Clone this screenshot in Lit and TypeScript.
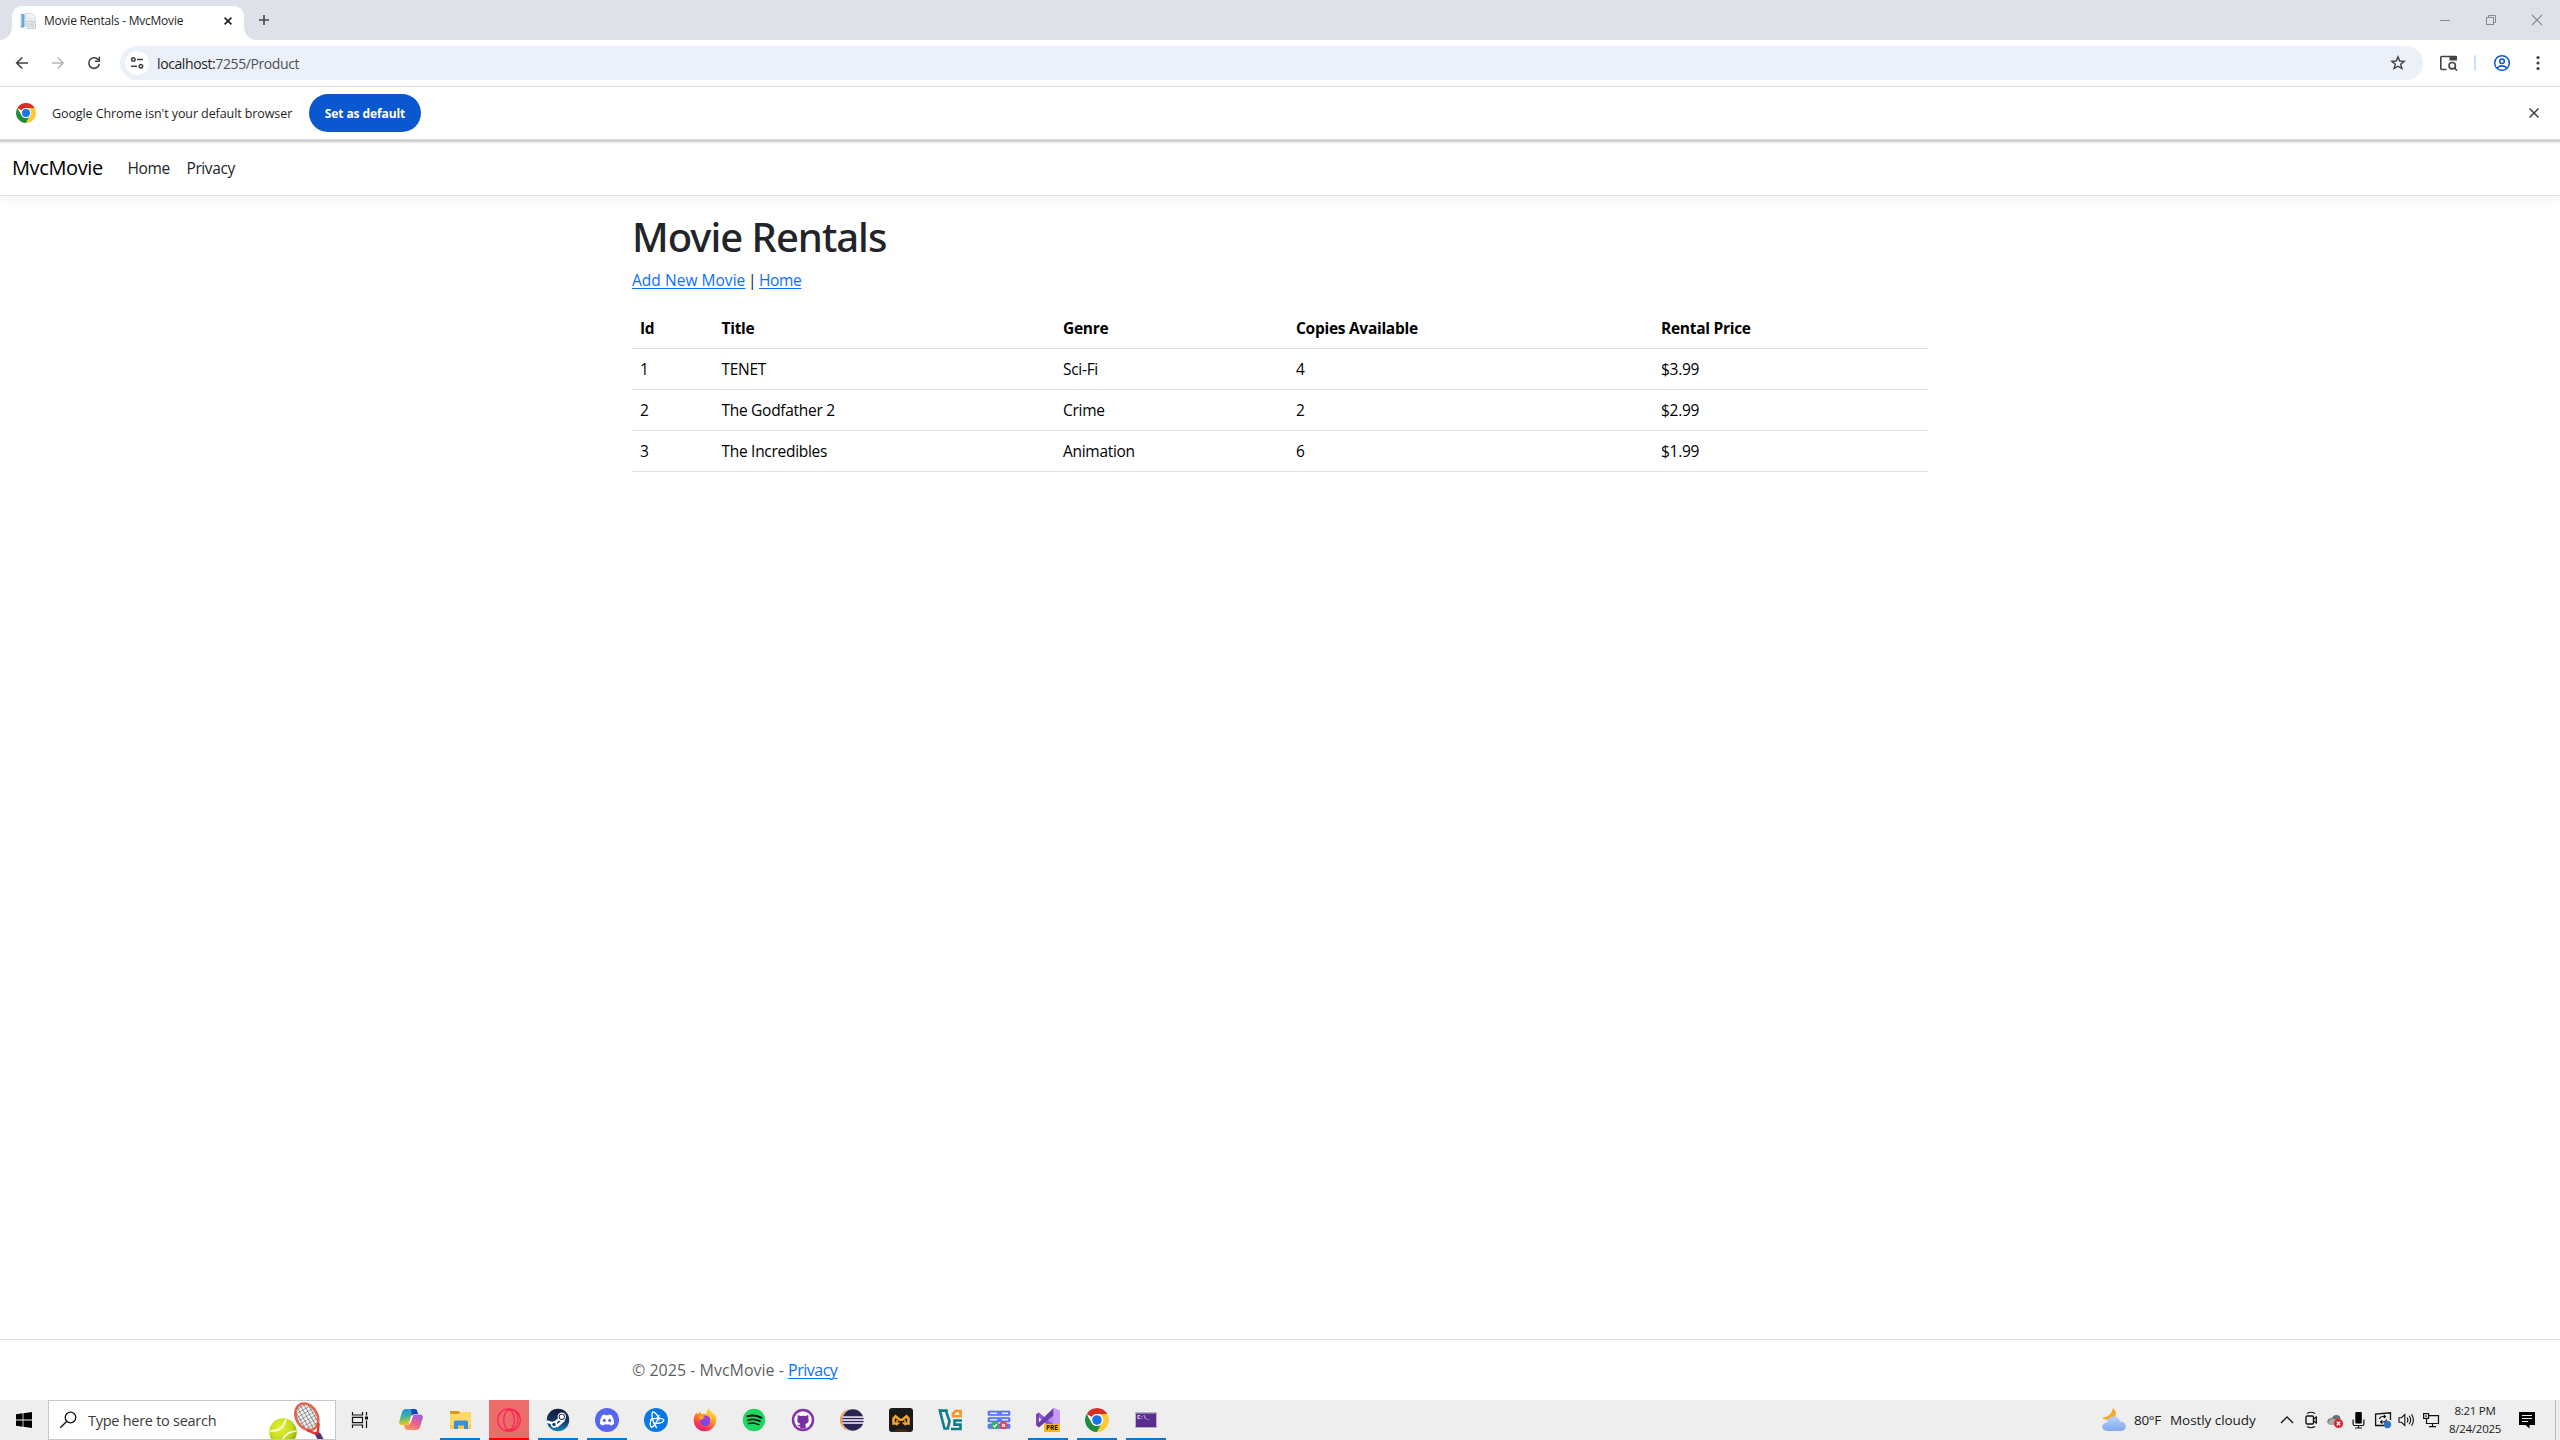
import { LitElement, html, css, svg, TemplateResult } from "lit";
import { customElement } from "lit/decorators.js";
import { classMap } from "lit/directives/class-map.js";

const icon = (size: number, body: unknown, box = size) =>
  html`<svg width=${size} height=${size} viewBox="0 0 ${box} ${box}" fill="none">${body}</svg>`;

const chromeLogo = svg`
  <circle cx="12" cy="12" r="12" fill="#fff"/>
  <path d="M1.610 6A12 12 0 0 1 22.390 6H12A6 6 0 0 0 6.800 9Z" fill="#d93025"/>
  <path d="M1.610 6A12 12 0 0 0 12 24L17.200 15A6 6 0 0 1 6.800 15Z" fill="#1e8e3e"/>
  <path d="M22.390 6A12 12 0 0 1 12 24L17.200 15A6 6 0 0 0 12 6Z" fill="#fcc934"/>
  <circle cx="12" cy="12" r="6" fill="#fff"/>
  <circle cx="12" cy="12" r="4.800" fill="#1a73e8"/>`;

interface App { art: TemplateResult | unknown; open?: boolean; alert?: boolean; }

const apps: App[] = [
  { art: svg`
    <defs>
      <linearGradient id="cp1" x1="0" y1="0" x2="0.2" y2="1"><stop offset="0" stop-color="#1a8ff0"/><stop offset=".5" stop-color="#3cb49a"/><stop offset="1" stop-color="#f2c811"/></linearGradient>
      <linearGradient id="cp2" x1="0.8" y1="0" x2="0.2" y2="1"><stop offset="0" stop-color="#a05be8"/><stop offset=".5" stop-color="#ec5f8c"/><stop offset="1" stop-color="#fb9a5a"/></linearGradient>
    </defs>
    <path d="M7 1H15.500Q17.500 1 18.200 3L19 6H15.500Q13.500 6 12.800 8L10.500 15Q9.800 17 7.800 17H3Q-.4 17 .4 13L3 4Q4 1 7 1Z" fill="url(#cp1)"/>
    <path d="M12 1H15.500Q17.500 1 18.200 3L19 6H15.500Q13.500 6 12.800 8Z" fill="#1547b8"/>
    <path d="M17 22H8.500Q6.500 22 5.800 20L5 17H8.500Q10.500 17 11.200 15L13.500 8.500Q14.200 6.500 16.200 6.500H21Q24.400 6.500 23.600 10.500L21 19Q20 22 17 22Z" fill="url(#cp2)"/>
    <path d="M14.200 7.200L12.200 7.800L9.800 15.800L11.600 14.800Z" fill="#fff"/>` },
  { open: true, art: svg`
    <path d="M2 3H11L12.500 5H21V8H2Z" fill="#d69a1e"/>
    <path d="M2 6H11L12.500 4H23V21H2Z" fill="#ffd867"/>
    <path d="M2 17H23V20.500H2Z" fill="#fcc84b"/>
    <path d="M6 21V14Q6 12.500 7.500 12.500H18.500Q20 12.500 20 14V21H16V17.500H10V21Z" fill="#3a8fd8"/>` },
  { open: true, alert: true, art: svg`
    <g stroke="#fa1e4e" stroke-width="1.100"><circle cx="12" cy="12" r="11.300"/><ellipse cx="12" cy="12" rx="5.300" ry="10"/><path d="M9.500 2.500C19.500-1 21.500 8 21 12S18.500 24 9.500 21.500"/></g>` },
  { open: true, art: svg`
    <defs><linearGradient id="st" x1="0" y1="0" x2="0" y2="1"><stop offset="0" stop-color="#14193a"/><stop offset=".55" stop-color="#123764"/><stop offset="1" stop-color="#1287b8"/></linearGradient></defs>
    <circle cx="12" cy="12" r="11.200" fill="url(#st)"/>
    <path d="M1 13.500L7.500 15.800L13 11L17 13L10.500 18.500" stroke="#fff" stroke-width="2.600"/>
    <circle cx="8.200" cy="16.500" r="3.200" fill="#fff"/><circle cx="8" cy="16.500" r="1.700" fill="#17426d"/>
    <circle cx="15.800" cy="8.800" r="4.200" fill="#fff"/><circle cx="15.800" cy="8.800" r="3.100" fill="#16213f"/><circle cx="15.800" cy="8.800" r="2.200" fill="#fff"/>` },
  { open: true, art: svg`
    <circle cx="12" cy="12" r="12" fill="#5865f2"/>
    <path d="M7.300 7.200Q8.800 6.500 10 6.400L10.500 7.200H13.500L14 6.400Q15.300 6.500 16.700 7.200Q19.500 11.200 19.200 15.800Q17.500 17.200 15.400 17.600L14.500 16.200Q12 16.900 9.500 16.200L8.600 17.600Q6.500 17.200 4.800 15.800Q4.500 11.200 7.300 7.200Z" fill="#fff"/>
    <ellipse cx="9.300" cy="12.400" rx="1.500" ry="1.700" fill="#5865f2"/><ellipse cx="14.700" cy="12.400" rx="1.500" ry="1.700" fill="#5865f2"/>` },
  { art: svg`
    <circle cx="12" cy="12" r="12" fill="#0a78e3"/>
    <g stroke="#fff" stroke-width="1.300" stroke-linecap="round"><path d="M9 3.800C7 6 8 14 12.500 19.500M9 3.800C11.500 4 14.500 8.500 15 12"/><path d="M19.800 12.200C18.500 9.500 11 9.500 6.500 12M19.800 12.200C19.500 14.800 14 15.800 10.500 15.200"/><path d="M7.300 19.300C10 19 14 13 15 7.500M7.300 19.300C5.500 18 6 14 7.500 11"/></g>` },
  { art: svg`
    <defs>
      <linearGradient id="ff" x1="0.8" y1="0" x2="0.25" y2="1"><stop offset="0" stop-color="#fff04a"/><stop offset=".4" stop-color="#ff9a1f"/><stop offset=".75" stop-color="#ff3b4f"/><stop offset="1" stop-color="#e31587"/></linearGradient>
      <linearGradient id="fi" x1="0.5" y1="0" x2="0.5" y2="1"><stop offset="0" stop-color="#b23ae0"/><stop offset="1" stop-color="#6250e0"/></linearGradient>
    </defs>
    <path d="M15.500.2C17.500 3 20 4.500 20.800 7C21.300 6.300 21.300 5.500 21.200 5C23.500 8.500 24 14 21.300 18A11.200 11.200 0 0 1 1.500 16.500C-.2 12 1 7.500 3.700 4.600L5 6.500L6.800 3.200L8.300 6C10 5.500 12 5.600 13.500 6.200C13.500 4 14 1.800 15.500.2Z" fill="url(#ff)"/>
    <circle cx="12.300" cy="12.800" r="5.300" fill="url(#fi)"/>
    <path d="M5.500 9C7 7 10 7.500 12 9.800C10.500 10 9.500 10.800 9 12C7.500 12 6 11 5.500 9Z" fill="#ffa51f"/>
    <path d="M14 6.300C18 8 18.500 12 17 15C19 13 19.500 9 17.500 6.500Z" fill="#ffd23a"/>` },
  { art: svg`
    <circle cx="12" cy="12" r="11.200" fill="#1ed760"/>
    <g stroke="#111" stroke-linecap="round"><path d="M5.500 8.300Q12.500 6.300 19.200 9.700" stroke-width="2.100"/><path d="M6 12Q12.300 10.300 18 13.200" stroke-width="1.800"/><path d="M6.500 15.500Q12 14 16.900 16.600" stroke-width="1.500"/></g>` },
  { art: svg`
    <circle cx="12" cy="12" r="11.200" fill="#8534a8"/>
    <circle cx="12" cy="12" r="8.700" fill="#fff"/>
    <path d="M6.800 7L9.600 8Q12 7.400 14.400 8L17.200 7Q17.800 8.500 17.300 10Q19 14.500 14.500 16L14.800 20.500H9.200V18.500Q7 18.800 6 16.500Q8 17.500 9.500 16Q5 14.500 6.700 10Q6.200 8.500 6.800 7Z" fill="#7a2f9f"/>` },
  { art: svg`
    <circle cx="11" cy="12" r="11" fill="#f79433"/>
    <circle cx="13" cy="12" r="11.200" fill="#eee"/>
    <circle cx="13" cy="12" r="10.700" fill="#2c2255"/>
    <g fill="#e8e4f2"><rect x="3" y="8.300" width="21" height="1.600"/><rect x="2.500" y="11.200" width="21.500" height="1.700"/><rect x="3" y="14.200" width="21" height="1.600"/></g>` },
  { art: svg`
    <rect width="24" height="24" rx="3" fill="#1b1a1a"/><path d="M3 24Q12 17 21 24Z" fill="#3a2d16"/>
    <path d="M8 15.500H4.500V10.500L6.500 8.300L10 11.200Q12 12.500 14 11.200L17.500 8.300L19.500 10.500V15.500H16" stroke="#f8a42c" stroke-width="2.500"/>
    <path d="M8 12V16.500L10.500 14.500M16 12V16.500L13.500 14.500" stroke="#f8a42c" stroke-width="1.500"/>` },
  { art: svg`
    <g stroke="#0d7d8c" stroke-width="2.600"><path d="M8.500 5V2.600H1.800L6.500 20.500H9.800L11.500 13L8.600 5"/><path d="M24 12.500H16.500V16.600H22.500V21H13"/></g>
    <path d="M15 8.300V5.500L17.500 3H22.500V8.300Z" stroke="#f7931e" stroke-width="2.600"/>` },
  { art: svg`
    <g fill="#5f7df5" stroke="#4a66e8" stroke-width=".6"><rect x="1" y="3" width="22" height="4.600" rx="1"/><rect x="1" y="9.500" width="22" height="4.600" rx="1"/><rect x="1" y="16" width="22" height="4.600" rx="1"/></g>
    <g stroke="#dfe6ff" stroke-width="1.400"><path d="M3 5.300H10M3 11.800H10M15 5.300H21M15 11.800H21"/></g>
    <circle cx="8" cy="17.300" r="3.800" fill="#2fb35a"/><path d="M6.200 17.300L7.600 18.800L10 16" stroke="#fff" stroke-width="1.200"/>
    <circle cx="16.500" cy="17.300" r="3.800" fill="#ee3b4b"/><path d="M15 15.800L18 18.800M18 15.800L15 18.800" stroke="#fff" stroke-width="1.200"/>` },
  { open: true, art: svg`
    <path d="M17.500 0L24 2.800V20.500L17.500 23.500L9 14Z" fill="#b98af0"/>
    <path d="M0 6.500L3 4.500L18 17V23.500Z" fill="#9157d8"/>
    <path d="M0 6.500L3 4.500V18.500L0 17Z" fill="#7a49b8"/>
    <path d="M17.500 0V7.500L3 19.500L0 17Z" fill="#6b3fa5"/>
    <path d="M17.500 0L24 2.800V20.500H17.500Z" fill="#c79af8"/>
    <rect x="8" y="16" width="16" height="8" rx=".8" fill="#fcb714"/>
    <text x="16" y="22.300" text-anchor="middle" class="pre">PRE</text>` },
  { open: true, art: chromeLogo },
  { open: true, art: svg`
    <rect x="1" y="4" width="22" height="16" fill="#b7b2bd"/>
    <rect x="2" y="5.500" width="20" height="13.500" fill="#5a2d91"/>
    <text x="3.200" y="11.300" class="prompt">C:\\_</text>` },
];

const tray = [
  svg`<path d="M6 15L12 9L18 15" stroke="#111" stroke-width="1.300"/>`,
  svg`<path d="M8 5.500Q12 3 16 5.500M8 18.500Q12 21 16 18.500" stroke="#111" stroke-width="1.200"/><rect x="7" y="8" width="7.500" height="8" rx="1.300" stroke="#111" stroke-width="1.400"/><path d="M14.500 11L17.300 9V15L14.500 13" stroke="#111" stroke-width="1.300"/>`,
  svg`<path d="M6.500 16.500Q3 15 5 11.500Q7 9.500 9 10Q10.500 6.500 14 7Q17.500 7.500 17.500 11L12.500 16.500Z" fill="#6e6e6e"/><path d="M5 15.500Q5.500 11 10 10.500L16 13L11 17H7Z" fill="#a9a9a9"/><circle cx="15.500" cy="15.500" r="4.600" fill="#dc2430"/><path d="M13.800 13.800L17.200 17.200M17.200 13.800L13.800 17.200" stroke="#fff" stroke-width="1.300"/>`,
  svg`<rect x="8.300" y="4" width="6.500" height="11.500" rx="1" fill="#000"/><path d="M6.100 11.500V16Q6.100 17.500 7.500 17.500H15.500Q16.900 17.500 16.900 16V11.500M11.500 17.500V20M8 20H15" stroke="#111" stroke-width="1.200"/>`,
  svg`<path d="M13 17.500H4.600V6.200L19.500 4.800V12" stroke="#111" stroke-width="1.300"/><path d="M8.500 11Q9 8.500 12 8.500H14M12.800 6.800L14.500 8.500L12.800 10.200M15.500 11.500Q15 14 12 14H10M11.300 12.300L9.600 14L11.300 15.700" stroke="#111" stroke-width="1.200"/><circle cx="16.500" cy="16.500" r="3.700" fill="#2f72bd"/>`,
  svg`<path d="M4 9.700H6.500L9.800 6.500V17.500L6.500 14.300H4Z" stroke="#111" stroke-width="1.100"/><path d="M12 9.500Q13.800 12 12 14.500M14.200 7.800Q17 12 14.200 16.200M16.500 6.200Q20.300 12 16.500 17.800" stroke="#111" stroke-width="1.100"/>`,
  svg`<path d="M9.500 7.600H19.500V15.500H7.500V12.500M13.500 15.500V18.500M10 18.600H17M7.500 10.500V13" stroke="#111" stroke-width="1.200"/><rect x="4.600" y="5.600" width="5" height="4.800" stroke="#111" stroke-width="1.200"/><rect x="6.300" y="7.300" width="1.500" height="1.500" fill="#111"/>`,
];

const movies = [
  { id: 1, title: "TENET", genre: "Sci-Fi", copies: 4, price: "$3.99" },
  { id: 2, title: "The Godfather 2", genre: "Crime", copies: 2, price: "$2.99" },
  { id: 3, title: "The Incredibles", genre: "Animation", copies: 6, price: "$1.99" },
];

@customElement("browser-chrome")
export class BrowserChrome extends LitElement {
  static styles = css`
    :host { display: block; font-family: "Open Sans", "Noto Sans", sans-serif; color: #1f1f1f; }
    svg { display: block; flex: none; }
    .strip { display: flex; align-items: center; height: 40px; background: #dee1e8; padding-left: 12px; box-sizing: border-box; }
    .tab { position: relative; display: flex; align-items: center; box-sizing: border-box; width: 232px; height: 34px; margin-top: 6px; padding: 0 12px 5px 8px; background: #fff; border-radius: 10px 10px 0 0; }
    .tab::before, .tab::after { content: ""; position: absolute; bottom: 0; width: 12px; height: 12px; }
    .tab::before { left: -12px; background: radial-gradient(circle at 0 0, transparent 11.5px, #fff 12px); }
    .tab::after { right: -12px; background: radial-gradient(circle at 100% 0, transparent 11.5px, #fff 12px); }
    .tab-title { flex: 1; margin-left: 8px; font-size: 12px; letter-spacing: -0.22px; white-space: nowrap; }
    .plus { margin-left: 12px; }
    .windows { display: flex; gap: 22px; margin-left: auto; margin-right: 11px; }
    .toolbar { display: flex; align-items: center; height: 46px; background: #fff; border-bottom: 1px solid #dcdddf; padding-left: 10px; }
    .nav { display: flex; gap: 12px; margin-right: 14px; }
    .omnibox { display: flex; align-items: center; flex: 1; height: 34px; border-radius: 17px; background: #ecf0f9; padding: 0 12px 0 5px; }
    .site { display: flex; align-items: center; justify-content: center; width: 24px; height: 24px; border-radius: 50%; background: #fff; }
    .url { flex: 1; margin-left: 8px; font-size: 14px; letter-spacing: -0.4px; color: #4d5156; }
    .host { color: #1f1f1f; }
    .tools { display: flex; align-items: center; }
    .side { margin: 0 13px 0 14px; }
    .bar { width: 2px; height: 16px; border-radius: 1px; background: #cfe0fc; }
    .profile { margin: 0 14px 0 16px; }
    .more { margin-right: 10px; }
    .infobar { position: relative; display: flex; align-items: center; height: 52px; background: #fff; padding: 0 14px 0 16px; }
    .infobar::after { content: ""; position: absolute; left: 0; right: 0; top: 52px; height: 5px; background: linear-gradient(#dadada 0 1px, #cbcbcb 1px 2px, #d6d6d6 2px 3px, #eeeeee 3px 4px, #f9f9f9 4px 5px); }
    .message { margin-left: 16px; width: 241px; font-size: 12.5px; letter-spacing: -0.09px; white-space: nowrap; }
    .default { display: flex; align-items: center; justify-content: center; width: 112px; height: 38px; margin-left: 16px; border: 0; border-radius: 19px; background: #0b57d0; color: #fff; font: 700 12px "Open Sans", sans-serif; letter-spacing: -0.1px; padding: 0; white-space: nowrap; }
    .dismiss { margin-left: auto; }
  `;

  render() {
    return html`
      <div class="strip">
        <div class="tab">
          ${icon(16, svg`<rect x=".8" y="1" width="3.700" height="13.500" fill="#63a6d8"/><rect x="1" y="2" width="1.200" height="11" fill="#9ccbea"/><path d="M5.500.5H12L15 3.500V13H5.500Z" fill="#f3f5f7" stroke="#c9ced3" stroke-width=".8"/><path d="M7 5H13M7 7H13" stroke="#d5dade" stroke-width=".8"/><rect x="7" y="8.500" width="8.500" height="7" fill="#e6eaed" stroke="#c3c8cd" stroke-width=".8"/><path d="M8.500 11H14M8.500 13H14" stroke="#b9bfc5" stroke-width=".8"/>`)}
          <span class="tab-title">Movie Rentals - MvcMovie</span>
          ${icon(8, svg`<path d="M.6.6L7.400 7.400M7.400.6L.6 7.400" stroke="#1f1f1f" stroke-width="1.600"/>`)}
        </div>
        <span class="plus">${icon(16, svg`<path d="M8 3V13M3 8H13" stroke="#45484d" stroke-width="1.600"/>`)}</span>
        <div class="windows">
          ${icon(24, svg`<path d="M7 12.500H17" stroke="#868a90"/>`)}
          ${icon(24, svg`<rect x="7.500" y="9.500" width="7" height="7" stroke="#868a90"/><path d="M9.500 9.500V7.500H16.500V14.500H14.500" stroke="#868a90"/>`)}
          ${icon(24, svg`<path d="M7 7L17 17M17 7L7 17" stroke="#868a90" stroke-width="1.100"/>`)}
        </div>
      </div>
      <div class="toolbar">
        <div class="nav">
          ${icon(24, svg`<path d="M18 12H7M12.200 6.500L6.700 12L12.200 17.500" stroke="#3f4246" stroke-width="1.600"/>`)}
          ${icon(24, svg`<path d="M6 12H17M11.800 6.500L17.300 12L11.800 17.500" stroke="#b3b5b8" stroke-width="1.600"/>`)}
          ${icon(24, svg`<path d="M16.600 9.200A5.300 5.300 0 1 0 17.300 13" stroke="#3f4246" stroke-width="1.600"/><path d="M17.300 5.800V10.200H12.900" stroke="#3f4246" stroke-width="1.600"/>`)}
        </div>
        <div class="omnibox">
          <span class="site">${icon(16, svg`<g stroke="#3f4246" stroke-width="1.600"><circle cx="4.300" cy="4.500" r="1.700"/><path d="M8 4.500H14M2 11.200H8"/><circle cx="11.900" cy="11.200" r="1.700"/></g>`)}</span>
          <span class="url"><span class="host">localhost:</span>7255/Product</span>
          ${icon(24, svg`<path d="M11 5.800L12.700 10L17.200 10.300L13.700 13.200L14.900 17.600L11 15.200L7.100 17.600L8.300 13.200L4.800 10.300L9.300 10Z" stroke="#3f4246" stroke-width="1.400"/>`)}
        </div>
        <div class="tools">
          <span class="side">${icon(24, svg`<path d="M9.500 18.500H4.800Q3.800 18.500 3.800 17.500V6.500Q3.800 5.500 4.800 5.500H18.500" stroke="#3f4246" stroke-width="1.600"/><rect x="12.500" y="5" width="7.500" height="4.500" fill="#3f4246"/><circle cx="15.200" cy="14.700" r="3.200" stroke="#3f4246" stroke-width="1.600"/><path d="M17.400 17L20 19.600" stroke="#3f4246" stroke-width="1.600"/>`)}</span>
          <span class="bar"></span>
          <span class="profile">${icon(20, svg`<circle cx="10" cy="10" r="7.300" stroke="#0b57d0" stroke-width="1.500"/><circle cx="10" cy="8.300" r="2.300" stroke="#0b57d0" stroke-width="1.500"/><path d="M4.900 15Q10 10.800 15.100 15" stroke="#0b57d0" stroke-width="1.500"/>`)}</span>
          <span class="more">${icon(24, svg`<g fill="#3f4246"><circle cx="12" cy="6.500" r="1.600"/><circle cx="12" cy="12" r="1.600"/><circle cx="12" cy="17.500" r="1.600"/></g>`)}</span>
        </div>
      </div>
      <div class="infobar">
        ${icon(20, chromeLogo, 24)}
        <span class="message">Google Chrome isn't your default browser</span>
        <button class="default">Set as default</button>
        <span class="dismiss">${icon(24, svg`<path d="M7.500 7.500L16.500 16.500M16.500 7.500L7.500 16.500" stroke="#3f4246" stroke-width="1.500"/>`)}</span>
      </div>`;
  }
}

@customElement("movie-page")
export class MoviePage extends LitElement {
  static styles = css`
    :host { display: flex; flex-direction: column; flex: 1; background: #fff; font: 15.5px/24px "Open Sans", "Noto Sans", sans-serif; color: #212529; }
    a { color: #0d6efd; text-decoration: underline; text-decoration-thickness: 1px; text-underline-offset: 2px; }
    .navbar { display: flex; align-items: center; box-sizing: border-box; height: 57px; padding: 1px 0 0 12px; border-bottom: 1px solid #dee2e6; box-shadow: 0 4px 12px rgba(0, 0, 0, .05); }
    .brand { width: 107.500px; font-size: 20px; letter-spacing: -0.38px; color: #000; }
    .nav-link { width: 51px; padding-left: 8px; letter-spacing: -0.4px; }
    .container { box-sizing: border-box; width: 1320px; margin: 0 auto; padding: 0 12px; }
    .content { flex: 1; padding-top: 17px; }
    h1 { margin: 0 0 7px; font: 500 40px/48px "Noto Sans", sans-serif; letter-spacing: -1px; }
    p { margin: 0 0 16px; letter-spacing: 0.04px; word-spacing: 0; }
    .sep { margin: 0 -1.5px; }
    .home { letter-spacing: -0.4px; }
    table { width: 100%; table-layout: fixed; border-collapse: separate; border-spacing: 0; color: #000; letter-spacing: -0.29px; }
    th, td { box-sizing: border-box; height: 41px; padding: 8px; border-bottom: 1px solid #dee2e6; text-align: left; }
    th { letter-spacing: -0.28px; }
    .c-id { width: 81.5px; } .c-title { width: 341.5px; } .c-genre { width: 233px; } .c-copies { width: 365px; }
    .footer { border-top: 1px solid #dee2e6; height: 60px; font-size: 16px; line-height: 61px; color: rgba(33, 37, 41, .75); }
    .footer-link { letter-spacing: -0.5px; }
  `;

  render() {
    return html`
      <nav class="navbar"><span class="brand">MvcMovie</span><span class="nav-link">Home</span><span class="nav-link">Privacy</span></nav>
      <main class="container content">
        <h1>Movie Rentals</h1>
        <p><a>Add New Movie</a> <span class="sep">|</span> <a class="home">Home</a></p>
        <table>
          <thead><tr><th class="c-id">Id</th><th class="c-title">Title</th><th class="c-genre">Genre</th><th class="c-copies">Copies Available</th><th>Rental Price</th></tr></thead>
          <tbody>${movies.map(m => html`<tr><td>${m.id}</td><td>${m.title}</td><td>${m.genre}</td><td>${m.copies}</td><td>${m.price}</td></tr>`)}</tbody>
        </table>
      </main>
      <footer class="footer"><div class="container">© 2025 - MvcMovie - <a class="footer-link">Privacy</a></div></footer>`;
  }
}

@customElement("task-bar")
export class TaskBar extends LitElement {
  static styles = css`
    :host { display: flex; height: 40px; background: #eee; font-family: "Open Sans", "Noto Sans", sans-serif; color: #1a1a1a; }
    svg { display: block; flex: none; }
    .start { display: flex; align-items: center; justify-content: center; width: 48px; }
    .search { display: flex; align-items: center; box-sizing: border-box; width: 288px; height: 40px; border: 1px solid #c8c8c8; background: #fff; padding-left: 7px; overflow: hidden; }
    .hint { flex: 1; margin-left: 8px; font-size: 14.5px; letter-spacing: -0.27px; color: #3a3a3a; white-space: nowrap; }
    .view { display: flex; align-items: center; justify-content: center; width: 48px; }
    .apps { display: flex; gap: 9px; margin-left: 7px; }
    .app { display: flex; align-items: center; justify-content: center; box-sizing: border-box; width: 40px; height: 40px; border-bottom: 2px solid transparent; padding-top: 2px; }
    .open { border-bottom-color: #0078d7; }
    .alert { background: #ec6b6b; border-bottom-color: #f00; }
    .pre { font: 700 6.5px "Open Sans", sans-serif; fill: #111; }
    .prompt { font: 700 5px "Liberation Mono", monospace; fill: #fff; }
    .right { display: flex; align-items: center; margin-left: auto; }
    .weather { display: flex; align-items: center; width: 173px; font-size: 13.5px; white-space: nowrap; }
    .temp { width: 36px; margin-left: 8px; letter-spacing: -0.3px; }
    .sky { letter-spacing: -0.06px; }
    .clock { display: flex; flex-direction: column; align-items: center; width: 64px; margin-right: 8px; font-size: 11.5px; line-height: 18px; letter-spacing: -0.25px; }
    .edge { width: 1px; height: 40px; margin: 0 4px 0 16px; background: #bdbdbd; }
  `;

  render() {
    return html`
      <div class="start">${icon(16, svg`<path d="M0 2.300L6.600 1.300V7.600H0ZM7.400 1.200L16 0V7.600H7.400ZM0 8.400H6.600V14.700L0 13.700ZM7.400 8.400H16V16L7.400 14.800Z" fill="#000"/>`)}</div>
      <div class="search">
        ${icon(24, svg`<circle cx="14.500" cy="9.500" r="5.300" stroke="#111" stroke-width="1.300"/><path d="M10.800 13.300L4.300 19.800" stroke="#111" stroke-width="1.300"/>`)}
        <span class="hint">Type here to search</span>
        <svg width="66" height="38" viewBox="0 0 66 38">
          <defs>
            <radialGradient id="ball" cx=".4" cy=".35" r=".7"><stop offset="0" stop-color="#e6f03a"/><stop offset=".6" stop-color="#c3dc1c"/><stop offset="1" stop-color="#7fa60c"/></radialGradient>
            <pattern id="mesh" width="3.600" height="3.600" patternUnits="userSpaceOnUse"><rect width="3.600" height="3.600" fill="#f4f4f4"/><path d="M0 0H3.600M0 0V3.600" stroke="#555" stroke-width="1.100"/></pattern>
          </defs>
          <g transform="translate(1.500 0) rotate(-30 37 16)"><ellipse cx="36.500" cy="15.500" rx="10.500" ry="14" fill="url(#mesh)" stroke="#e2654e" stroke-width="2.600"/><path d="M30 27L36 35L38 35L43.500 27" fill="none" stroke="#d8413c" stroke-width="2.400"/><rect x="35" y="33" width="4.500" height="4" fill="#c9333b"/><rect x="34.500" y="36" width="5.500" height="14" fill="#54376b"/></g>
          <circle cx="14" cy="31" r="13.800" fill="url(#ball)"/>
          <path d="M1 30Q14 31 17 18M12 44Q14 31 27.500 30" stroke="#f6fadc" stroke-width="1.700" fill="none"/>
        </svg>
      </div>
      <div class="view">${icon(20, svg`<path d="M2.500 2V5H12.500V2M2.500 18V15H12.500V18M2.500 7.300H12.500V12.700H2.500ZM16.500 2V5.500M16.500 10.500V18" stroke="#111" stroke-width="1.200"/><rect x="15" y="6.500" width="3" height="3" fill="#111"/>`)}</div>
      <div class="apps">${apps.map(a => html`<div class=${classMap({ app: true, open: !!a.open, alert: !!a.alert })}>${icon(24, a.art)}</div>`)}</div>
      <div class="right">
        <div class="weather">
          ${icon(24, svg`<defs><linearGradient id="cl" x1="0" y1="0" x2="0" y2="1"><stop offset="0" stop-color="#b9d3fb"/><stop offset="1" stop-color="#7fa8ee"/></linearGradient></defs><path d="M11 0Q15 3 13.500 8Q10 13 3 11.500Q0 10.500 .8 9.500Q9 9 11 0Z" fill="#f6a92c"/><path d="M5.500 23Q0 22.500 .3 18Q1 14.500 5 14.500Q6 8.500 12 8.500Q17 9 18 13.500Q23.700 13.500 23.800 18.500Q23.500 22.500 19 23Z" fill="url(#cl)"/>`)}
          <span class="temp">80°F</span><span class="sky">Mostly cloudy</span>
        </div>
        ${tray.map(t => icon(24, t))}
        <div class="clock"><span>8:21 PM</span><span>8/24/2025</span></div>
        ${icon(24, svg`<path d="M4 4H20V17H14.500V20.500L10.500 17H4Z" fill="#000"/><path d="M7 7.500H17M7 10.500H17M7 13.500H13" stroke="#eee" stroke-width="1.200"/>`)}
        <span class="edge"></span>
      </div>`;
  }
}

@customElement("app-root")
export class AppRoot extends LitElement {
  static styles = css`
    :host { display: flex; flex-direction: column; height: 1440px; overflow: hidden; background: #fff; }
  `;
  render() {
    return html`<browser-chrome></browser-chrome><movie-page></movie-page><task-bar></task-bar>`;
  }
}
